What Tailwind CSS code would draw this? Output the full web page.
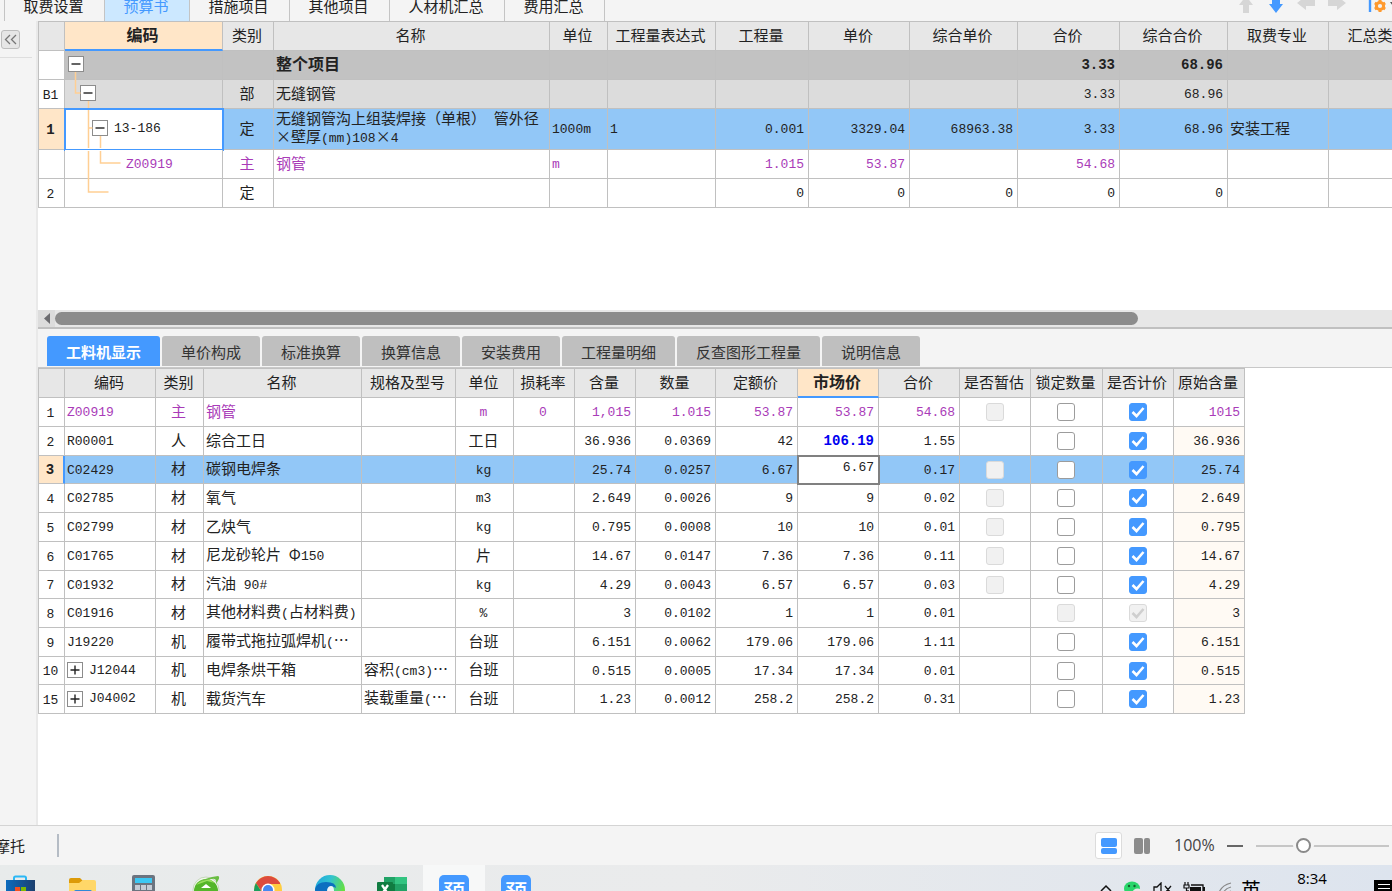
<!DOCTYPE html>
<html lang="zh-CN">
<head>
<meta charset="utf-8">
<title>预算书</title>
<script src="https://cdn.jsdelivr.net/npm/@tailwindcss/browser@4"></script>
</head>
<body class="flex h-screen flex-col overflow-hidden bg-[#f4f4f4] font-['Noto_Sans_CJK_SC',sans-serif] text-[15px] leading-[17px] text-[#222]">

<!-- module tabs and toolbar -->
<header class="flex h-[21px] shrink-0 items-end justify-between overflow-hidden">
  <nav class="ml-1 flex items-end border-l border-[#c4c4c4]">
    <button class="h-[31px] w-[100px] shrink-0 border-r border-[#c4c4c4] pr-[2px]">取费设置</button>
    <button class="h-[31px] w-[85px] shrink-0 border-r border-[#c4c4c4] bg-[#cce8ff] pr-[2px] text-[#4499ff]">预算书</button>
    <button class="h-[31px] w-[100px] shrink-0 border-r border-[#c4c4c4] pr-[2px]">措施项目</button>
    <button class="h-[31px] w-[100px] shrink-0 border-r border-[#c4c4c4] pr-[2px]">其他项目</button>
    <button class="h-[31px] w-[115px] shrink-0 border-r border-[#c4c4c4] pr-[2px]">人材机汇总</button>
    <button class="h-[31px] w-[100px] shrink-0 border-r border-[#c4c4c4] pr-[2px]">费用汇总</button>
  </nav>
  <div class="flex h-[31px] items-center">
    <button aria-label="上移" class="w-[30px]"><svg class="mx-auto" width="20" height="20" viewBox="0 0 20 20" fill="#d6d6d6"><path d="M10 0l7 9h-4v8H7V9H3z"/></svg></button>
    <button aria-label="下移" class="w-[30px]"><svg class="mx-auto" width="20" height="20" viewBox="0 0 20 20" fill="#4499ff"><path d="M10 17l7-9h-3V0H6v8H3z"/></svg></button>
    <button aria-label="升级" class="w-[30px]"><svg class="mx-auto" width="20" height="20" viewBox="0 0 20 20" fill="#d6d6d6"><path d="M1 7l9-7v4h9v6h-9v4z"/></svg></button>
    <button aria-label="降级" class="w-[30px]"><svg class="mx-auto" width="20" height="20" viewBox="0 0 20 20" fill="#d6d6d6"><path d="M20 7l-9-7v4H2v6h9v4z"/></svg></button>
    <button aria-label="设置" class="ml-[17px] w-6"><svg width="24" height="24" viewBox="0 0 24 24"><path d="M2 0v18" stroke="#4499ff" stroke-width="2.400"/><g fill="none" stroke="#ff9a2e"><circle cx="12" cy="12" r="3.600" stroke-width="3"/><path d="M12 6v2M12 16v2M6.800 9l1.800 1M15.400 14l1.800 1M6.800 15l1.800-1M15.400 10l1.800-1" stroke-width="3"/></g><path d="M22 8h6l-3 4z" fill="#555"/></svg></button>
  </div>
</header>

<div class="flex min-h-0 flex-1">
  <aside class="w-[38px] shrink-0 border-r-2 border-[#e9e9e9] pt-[9px]">
    <button aria-label="收起" class="ml-px flex h-[19px] w-[19px] items-center justify-center rounded-[3px] border border-[#bdbdbd] bg-[#e6e6e6]"><svg width="13" height="11" viewBox="0 0 13 11" fill="none" stroke="#777" stroke-width="1.300"><path d="M6 1L1.500 5.500 6 10M12 1L7.500 5.500 12 10"/></svg></button>
    <div class="mt-2 mr-1 h-px bg-[#dedede]"></div>
  </aside>

  <main class="flex min-w-0 flex-1 flex-col bg-white">
    <section class="h-[289px] shrink-0 overflow-hidden">
      <table id="budget" class="w-[1391px] table-fixed border-separate border-spacing-0 border-t border-l border-[#c0c0c0]"></table>
    </section>

    <!-- horizontal scroll bar -->
    <div class="flex h-[17px] shrink-0 items-center bg-[#e7e7e7]">
      <button aria-label="向左滚动" class="flex h-full w-[17px] items-center justify-center bg-[#dcdcdc]"><svg width="6" height="11" viewBox="0 0 6 11"><path d="M6 0v11L0 5.500z" fill="#6c6c70"/></svg></button>
      <div class="h-[13px] w-4/5 rounded-full bg-[#8c8c8c]"></div>
    </div>
    <div class="h-[2px] shrink-0 bg-[#c0c0c0]"></div>

    <nav class="flex h-[38px] shrink-0 items-center gap-[2px] bg-[#f4f4f4] pt-[7px] pb-px pl-[9px] text-[#333]">
      <button class="h-full rounded-t-[3px] bg-[#4499ff] px-[19px] font-bold text-white">工料机显示</button>
      <button class="h-full rounded-t-[3px] bg-[#bfbfbf] px-[19px]">单价构成</button>
      <button class="h-full rounded-t-[3px] bg-[#bfbfbf] px-[19px]">标准换算</button>
      <button class="h-full rounded-t-[3px] bg-[#bfbfbf] px-[19px]">换算信息</button>
      <button class="h-full rounded-t-[3px] bg-[#bfbfbf] px-[19px]">安装费用</button>
      <button class="h-full rounded-t-[3px] bg-[#bfbfbf] px-[19px]">工程量明细</button>
      <button class="h-full rounded-t-[3px] bg-[#bfbfbf] px-[19px]">反查图形工程量</button>
      <button class="h-full rounded-t-[3px] bg-[#bfbfbf] px-[19px]">说明信息</button>
    </nav>
    <section class="min-h-0 flex-1 overflow-hidden border-t border-[#c8c8c8]">
      <table id="materials" class="w-[1207px] table-fixed border-separate border-spacing-0 border-t border-l border-[#c0c0c0]"></table>
    </section>
  </main>
</div>

<!-- status bar -->
<footer class="flex h-10 shrink-0 items-center justify-between overflow-hidden border-t border-[#d4d4d4]">
  <div class="flex items-center">
    <span class="-ml-[5px]">摩托</span>
    <span class="ml-8 h-[23px] w-[2px] bg-[#b5bcc5]"></span>
  </div>
  <div class="flex items-center pr-[3px]">
    <button aria-label="上下布局" class="flex h-[27px] w-[27px] items-center justify-center rounded-[3px] border border-[#dcdcdc] bg-white"><svg width="16" height="16" fill="#4499ff"><rect width="16" height="9" rx="2"/><rect y="10" width="16" height="6" rx="2"/></svg></button>
    <button aria-label="左右布局" class="ml-3"><svg width="16" height="16" fill="#8c8c8c"><rect width="9" height="16" rx="2"/><rect x="10" width="6" height="16" rx="2"/></svg></button>
    <span class="ml-6 w-[40px] font-['Open_Sans',sans-serif] text-[16px] text-[#444]">100%</span>
    <button aria-label="缩小" class="ml-[13px] h-5 w-4"><span class="block h-[2px] bg-[#666]"></span></button>
    <input type="range" aria-label="缩放比例" min="0" max="100" value="34" class="ml-[13px] h-[2px] w-[133px] appearance-none bg-[#c6c6c6] [&::-webkit-slider-thumb]:h-[15px] [&::-webkit-slider-thumb]:w-[15px] [&::-webkit-slider-thumb]:appearance-none [&::-webkit-slider-thumb]:rounded-full [&::-webkit-slider-thumb]:border-2 [&::-webkit-slider-thumb]:border-[#8a8a8a] [&::-webkit-slider-thumb]:bg-white [&::-webkit-slider-thumb]:shadow-[0_0_0_3px_#f4f4f4]">
  </div>
</footer>

<!-- system task bar -->
<div class="flex h-[26px] shrink-0 items-start justify-between overflow-hidden bg-linear-to-r from-[#e8ebeb] via-[#eaebec] to-[#dde4ee]">
  <div class="-ml-[11px] flex">
    <button aria-label="应用商店" class="flex h-[48px] w-[62px] justify-center pt-[10px]"><svg width="30" height="30" viewBox="0 0 30 30"><defs><linearGradient id="st" x2="1"><stop stop-color="#0b6cbe"/><stop offset="1" stop-color="#1c3f6e"/></linearGradient></defs><path d="M9 6V3a1.500 1.500 0 011.500-1.500h9A1.500 1.500 0 0121 3v3" fill="none" stroke="#2bb8f5" stroke-width="2"/><path d="M1 5h29v20a4 4 0 01-4 4H5a4 4 0 01-4-4z" fill="url(#st)"/><path d="M10 12h5v5h-5z" fill="#f25022"/><path d="M16 12h5v5h-5z" fill="#7fba00"/><path d="M10 18h5v5h-5z" fill="#00a4ef"/><path d="M16 18h5v5h-5z" fill="#ffb900"/></svg></button>
    <button aria-label="文件资源管理器" class="flex h-[48px] w-[62px] justify-center pt-[10px]"><svg width="28" height="28" viewBox="0 0 28 28"><path d="M1 5a2 2 0 012-2h9l3 3-3 4H1z" fill="#dc9a08"/><path d="M1 8h10l4-3h11a2 2 0 012 2v18H1z" fill="#ffd768"/><path d="M6 17a2 2 0 012-2h14a2 2 0 012 2v9H6z" fill="#2f88d8"/></svg></button>
    <button aria-label="计算器" class="flex h-[48px] w-[62px] justify-center pt-[10px]"><svg width="24" height="28" viewBox="0 0 24 28"><rect width="23" height="28" rx="2" fill="#6b7480"/><path d="M3 3h17v5H3z" fill="#3cc8f4"/><path d="M3 10h5v5H3zM9 10h5v5H9zM15 10h5v5h-5zM3 16h5v5H3zM9 16h5v5H9zM15 16h5v5h-5z" fill="#c5ccd6"/></svg></button>
    <button aria-label="浏览器" class="flex h-[48px] w-[62px] justify-center pt-[10px]"><svg width="28" height="28" viewBox="0 0 28 28"><circle cx="14" cy="15" r="13" fill="#f4f8ef" stroke="#c5d8bb"/><circle cx="14" cy="16" r="12" fill="#54b62a"/><path d="M4 10Q9 4 17 4l6 4-8-2z" fill="#9ae05e"/><path d="M2 10Q14 2 26 1q3 1-2 8 1-6-4-5Q10 5 2 10z" fill="#69bd43"/><path d="M9 13l5-4 5 4z" fill="#fff"/></svg></button>
    <button aria-label="Chrome" class="flex h-[48px] w-[62px] justify-center pt-[11px]"><svg width="28" height="28" viewBox="0 0 28 28"><circle cx="14" cy="14" r="14" fill="#ffcd40"/><path d="M1.900 7A14 14 0 0126.100 7L26 8H14l-6 8z" fill="#dd4b3e"/><path d="M1.900 7A14 14 0 0014 28l5-10H9z" fill="#1b9f5d"/><circle cx="14" cy="14" r="6.500" fill="#fff"/><circle cx="14" cy="14" r="5" fill="#4688f1"/></svg></button>
    <button aria-label="Edge" class="flex h-[48px] w-[62px] justify-center pt-[10px]"><svg width="30" height="30" viewBox="0 0 30 30"><defs><linearGradient id="ed" x2="1" y2=".4"><stop stop-color="#1aa4e0"/><stop offset=".5" stop-color="#33c3cf"/><stop offset="1" stop-color="#66e03e"/></linearGradient></defs><circle cx="15" cy="15" r="15" fill="url(#ed)"/><path d="M0 14Q2 7 11 7q10 0 10 6-4-3-7 0-4 6 4 14l-3 3Q1 29 0 14z" fill="#0c6fc0"/><path d="M12 15q1-4 4-4t3 5l-1 5h-5z" fill="#eef3f8"/></svg></button>
    <button aria-label="Excel" class="flex h-[48px] w-[62px] justify-center pt-[10px]"><svg width="30" height="30" viewBox="0 0 30 30"><path d="M7 2h12v7H7z" fill="#21a366"/><path d="M18 2h12v7H18z" fill="#33c481"/><path d="M7 9h12v14H7z" fill="#107c41"/><path d="M18 9h12v7H18z" fill="#21a366"/><path d="M18 16h12v12H18z" fill="#185c37"/><rect y="7" width="16" height="16" rx="1" fill="#107c41"/><path d="M5 10l6 9M11 10l-6 9" stroke="#fff" stroke-width="2.300"/></svg></button>
    <button class="flex h-[48px] w-[62px] justify-center bg-[#f7f8f8] pt-[10px]"><span class="h-[30px] w-[30px] rounded-[5px] bg-[#4499ff] pt-[3px] text-[22px] leading-6 font-medium text-white">预</span></button>
    <button class="flex h-[48px] w-[62px] justify-center pt-[10px]"><span class="h-[30px] w-[30px] rounded-[5px] bg-[#4499ff] pt-[3px] text-[22px] leading-6 font-medium text-white">预</span></button>
  </div>
  <div class="flex items-start">
    <button aria-label="显示隐藏的图标" class="w-6 pt-[19px]"><svg class="mx-auto" width="14" height="10" fill="none" stroke="#111" stroke-width="1.500"><path d="M2 7l5-5 5 5"/></svg></button>
    <button aria-label="微信" class="w-[30px] pt-4"><svg class="mx-auto" width="20" height="18" viewBox="0 0 20 18"><ellipse cx="9" cy="7.500" rx="8" ry="7" fill="#2bd66b"/><circle cx="6" cy="5" r="1.200" fill="#14602f"/><circle cx="11.500" cy="5" r="1.200" fill="#14602f"/><ellipse cx="14.500" cy="12" rx="5" ry="4.500" fill="#e8e8e8"/></svg></button>
    <button aria-label="音量" class="w-[30px] pt-[17px]"><svg class="mx-auto" width="20" height="16" fill="none" stroke="#111" stroke-width="1.300"><path d="M1 5h3l4-4v13l-4-4H1zM12 4l6 7M18 4l-6 7"/></svg></button>
    <button aria-label="电池" class="w-8 pt-[17px]"><svg class="mx-auto" width="22" height="16" viewBox="0 0 22 16"><path d="M8 3h12v9H5V8" fill="none" stroke="#111" stroke-width="1.300"/><path d="M7 5h11v6H7zM20 5h2v5h-2z" fill="#111"/><path d="M2 0v3M5 0v3M1 3h5v3H1zM3.500 6v3" fill="none" stroke="#111" stroke-width="1.200"/></svg></button>
    <button aria-label="网络" class="w-[30px] pt-[17px]"><svg class="mx-auto" width="16" height="16" fill="none" stroke="#888" stroke-width="1.200"><path d="M1 15Q2 4 14 1M5 15Q6 7 14 5M9 15q1-5 5-6"/></svg></button>
    <button class="w-[22px] pt-[14px] text-[20px] leading-[22px] text-black">英</button>
    <time class="w-[100px] pt-1 text-center font-['Open_Sans',sans-serif] text-[15px] leading-[18px] text-black">8:34</time>
    <button aria-label="通知" class="mt-[15px] ml-3"><svg width="18" height="18"><path d="M0 0h18v18H0z" fill="#000"/><path d="M4 4.500h12M4 8.500h12" stroke="#fff"/></svg></button>
  </div>
</div>

<script>
const line = 'border-r border-b border-[#c0c0c0]';
// Latin letters and digits are set in a monospaced face beside the Chinese text.
const mix = s => s.replace(/[\x20-\x7e]+/g, t => `<span class="font-['Liberation_Mono',monospace] text-[13px] leading-[13px] whitespace-pre">${t}</span>`);
const bold = s => s.replace(/[\x20-\x7e]+/g, t => `<span class="font-['Liberation_Mono',monospace] text-[14px] leading-[14px]">${t}</span>`);
const cols = w => '<colgroup>' + w.map(n => `<col style="width:${n}px">`).join('') + '</colgroup>';
const head = (names, active) => '<thead><tr>' + names.map((n, i) =>
  `<th scope="col" class="h-[29px] p-0 pr-[2px] text-center whitespace-nowrap ${i === active
    ? 'border-r border-b-2 border-r-[#c0c0c0] border-b-[#4499ff] bg-[#ffe6c8] pb-[2px] font-bold text-[16px]'
    : 'border-r border-b border-[#c0c0c0] bg-[#e7e7e7] pb-1 font-normal'}">${n}</th>`).join('') + '</tr></thead>';
const toggle = open => `<button aria-label="${open ? '折叠' : '展开'}" class="flex h-4 w-4 shrink-0 items-center justify-center border border-[#8c8c8c] bg-white"><svg width="10" height="10" stroke="#222" stroke-width="1.400"><path d="${open ? 'M0.500 5h9' : 'M0.500 5h9M5 0.500v9'}"/></svg></button>`;
const align = { l: 'pl-[2px] text-left', c: 'pr-[2px] text-center', r: 'pr-[4px] text-right' };

// ---- budget items ----
const tree = `<svg class="pointer-events-none absolute top-0 left-0 z-10 overflow-visible" width="60" height="28" fill="none" stroke="#ffcf94" stroke-width="1.500"><path d="M10.500 21v21h5M23.500 50v7M23.500 59v38M23.500 100v41h20M23.500 77h4M35.500 85v12M35.500 100v12h20"/></svg>`;
const items = [
  { h: 'h-[29px]', bg: 'bg-[#c2c2c2]', b: 1, no: '', code: tree + `<div class="flex pl-[3px]">${toggle(1)}</div>`, v: ['', '整个项目', '', '', '', '', '', '3.33', '68.96', '', ''] },
  { h: 'h-[29px]', bg: 'bg-[#dcdcdc]', no: 'B1', code: `<div class="flex pl-[15px]">${toggle(1)}</div>`, v: ['部', '无缝钢管', '', '', '', '', '', '3.33', '68.96', '', ''] },
  { h: 'h-[41px]', bg: 'bg-[#92c7f7]', sel: 1, no: '1', code: `<div class="flex items-center gap-[6px] pl-[27px]">${toggle(1)}${mix('13-186')}</div>`, v: ['定', '无缝钢管沟上组装焊接（单根） 管外径<br>×壁厚(mm)108×4', '1000m', '1', '0.001', '3329.04', '68963.38', '3.33', '68.96', '安装工程', ''] },
  { h: 'h-[29px]', bg: 'bg-white', fg: 'text-[#a93bb8]', no: '', code: `<div class="pl-[61px]">${mix('Z00919')}</div>`, v: ['主', '钢管', 'm', '', '1.015', '53.87', '', '54.68', '', '', ''] },
  { h: 'h-[29px]', bg: 'bg-white', no: '2', code: '', v: ['定', '', '', '', '0', '0', '0', '0', '0', '', ''] },
];
const a1 = ['c', 'l', 'l', 'l', 'r', 'r', 'r', 'r', 'r', 'l', 'l'];
document.getElementById('budget').innerHTML =
  cols([26, 158, 51, 276, 58, 108, 93, 101, 108, 102, 108, 101, 100]) +
  head(['', '编码', '类别', '名称', '单位', '工程量表达式', '工程量', '单价', '综合单价', '合价', '综合合价', '取费专业', '汇总类别'], 1) +
  '<tbody>' + items.map(r => `<tr class="${r.fg || ''}">` +
    `<th scope="row" class="${line} ${r.h} p-0 pr-[2px] pb-[3px] text-center ${r.sel ? 'bg-[#ffe6c8] font-bold' : 'bg-white font-normal'}">${r.sel ? bold(r.no) : mix(r.no)}</th>` +
    `<td class="${line} relative p-0 ${r.fg ? 'pb-[4px]' : 'pb-[2px]'} ${r.sel ? 'bg-white outline-2 -outline-offset-1 outline-[#4499ff]' : r.bg}">${r.code}</td>` +
    r.v.map((t, i) => `<td class="${line} ${align[a1[i]]} ${r.bg} pb-[4px] whitespace-nowrap ${r.b ? 'font-bold text-[16px]' : ''}">${r.b ? bold(t) : t.split('<br>').map(mix).join('<br>')}</td>`).join('') +
    '</tr>').join('') + '</tbody>';

// ---- labour, material and machine rows ----
// check states: n none, d disabled, e empty, y checked, x checked and disabled
const rows = [
  ['1', 'Z00919', '主', '钢管', '', 'm', '0', '1,015', '1.015', '53.87', '53.87', '54.68', 'dey', '1015'],
  ['2', 'R00001', '人', '综合工日', '', '工日', '', '36.936', '0.0369', '42', '106.19', '1.55', 'ney', '36.936'],
  ['3', 'C02429', '材', '碳钢电焊条', '', 'kg', '', '25.74', '0.0257', '6.67', '6.67', '0.17', 'dey', '25.74'],
  ['4', 'C02785', '材', '氧气', '', 'm3', '', '2.649', '0.0026', '9', '9', '0.02', 'dey', '2.649'],
  ['5', 'C02799', '材', '乙炔气', '', 'kg', '', '0.795', '0.0008', '10', '10', '0.01', 'dey', '0.795'],
  ['6', 'C01765', '材', '尼龙砂轮片 Φ150', '', '片', '', '14.67', '0.0147', '7.36', '7.36', '0.11', 'dey', '14.67'],
  ['7', 'C01932', '材', '汽油 90#', '', 'kg', '', '4.29', '0.0043', '6.57', '6.57', '0.03', 'dey', '4.29'],
  ['8', 'C01916', '材', '其他材料费(占材料费)', '', '%', '', '3', '0.0102', '1', '1', '0.01', 'ndx', '3'],
  ['9', 'J19220', '机', '履带式拖拉弧焊机(…', '', '台班', '', '6.151', '0.0062', '179.06', '179.06', '1.11', 'ney', '6.151'],
  ['10', '+J12044', '机', '电焊条烘干箱', '容积(cm3)…', '台班', '', '0.515', '0.0005', '17.34', '17.34', '0.01', 'ney', '0.515'],
  ['15', '+J04002', '机', '载货汽车', '装载重量(…', '台班', '', '1.23', '0.0012', '258.2', '258.2', '0.31', 'ney', '1.23'],
];
const names = ['是否暂估', '锁定数量', '是否计价'];
const box = (s, label) => {
  if (s === 'n') return '';
  const on = s === 'y' || s === 'x', off = s === 'd' || s === 'x';
  const look = s === 'y' ? 'border-[#4499ff] bg-[#4499ff]' : off ? 'border-[#dadada] bg-[#f1f1f1]' : 'border-[#9c9c9c] bg-white';
  return `<label class="mx-auto grid h-[18px] w-[18px]"><input type="checkbox" aria-label="${label}" ${on ? 'checked' : ''} ${off ? 'disabled' : ''} class="col-start-1 row-start-1 h-[18px] w-[18px] appearance-none rounded-[3px] border ${look}">` +
    (on ? `<svg class="pointer-events-none col-start-1 row-start-1" width="18" height="18" fill="none" stroke="${off ? '#cfcfcf' : '#fff'}" stroke-width="2.600"><path d="M3.500 9l4 4 7-8"/></svg>` : '') + '</label>';
};
const a2 = ['', '', 'c', 'l', 'l', 'c', 'c', 'r', 'r', 'r', 'r', 'r'];
document.getElementById('materials').innerHTML =
  cols([26, 91, 48, 158, 94, 58, 61, 61, 80, 82, 81, 81, 71, 72, 71, 71]) +
  head(['', '编码', '类别', '名称', '规格及型号', '单位', '损耗率', '含量', '数量', '定额价', '市场价', '合价', '是否暂估', '锁定数量', '是否计价', '原始含量'], 10) +
  '<tbody>' + rows.map((r, n) => {
    const sel = n === 2, bg = sel ? 'bg-[#92c7f7]' : 'bg-white';
    const h = n === 2 || n === 6 || n === 9 ? 'h-[28px]' : 'h-[29px]';
    let o = `<tr class="${n === 0 ? 'text-[#a93bb8]' : ''}"><th scope="row" class="${line} ${h} p-0 pr-[2px] pb-[3px] text-center text-[#222] ${sel ? 'border-r-2 border-r-[#4499ff] bg-[#ffe6c8] font-bold' : 'bg-white font-normal'}">${sel ? bold(r[0]) : mix(r[0])}</th>`;
    o += r[1][0] === '+'
      ? `<td class="${line} ${bg} p-0 pb-px pl-[2px]"><div class="flex items-center gap-[6px]">${toggle(0)}${mix(r[1].slice(1))}</div></td>`
      : `<td class="${line} ${bg} p-0 pb-[4px] pl-[2px]">${mix(r[1])}</td>`;
    for (let i = 2; i < 12; i++) {
      if (sel && i === 10) o += `<td class="${line} relative bg-white p-0 pb-[4px] outline-2 -outline-offset-1 outline-[#808080]"><input type="text" aria-label="市场价" value="${r[i]}" class="block w-full pr-[4px] text-right font-['Liberation_Mono',monospace] text-[13px] leading-[17px] outline-none"></td>`;
      else if (n === 1 && i === 10) o += `<td class="${line} ${bg} pr-[4px] pb-[4px] text-right font-bold text-[#0000f0]">${bold(r[i])}</td>`;
      else o += `<td class="${line} ${bg} ${align[a2[i]]} pb-[4px] whitespace-nowrap">${mix(r[i])}</td>`;
    }
    for (let k = 0; k < 3; k++) o += `<td class="${line} ${bg} p-0 pr-px">${box(r[12][k], names[k])}</td>`;
    return o + `<td class="${line} ${sel ? 'bg-[#92c7f7]' : n ? 'bg-[#fffaf4]' : 'bg-white'} pr-[4px] pb-[4px] text-right">${mix(r[13])}</td></tr>`;
  }).join('') + '</tbody>';
</script>
</body>
</html>
